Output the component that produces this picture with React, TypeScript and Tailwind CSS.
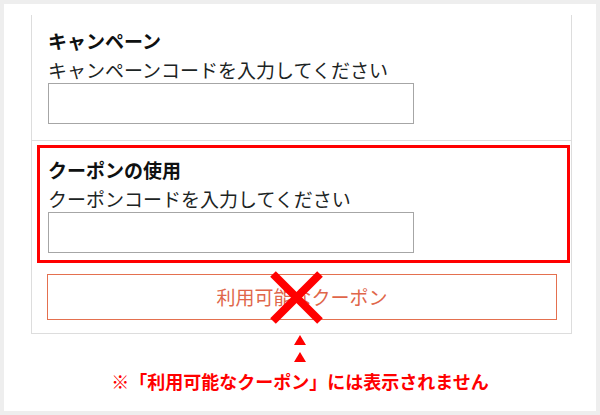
export default function App() {
  const font = { fontFamily: '"Noto Sans CJK JP", "Noto Sans", sans-serif' };

  return (
    <div className="w-[600px] h-[415px] bg-[#eeeeee] p-1" style={font}>
      <div className="h-full bg-white pt-[11px]">
        {/* Card */}
        <div className="ml-[27px] w-[541px] border-x border-b border-[#dddddd] text-[#0f1111]">
          {/* Campaign */}
          <div className="px-[16px] pt-[13px] pb-[16px] border-b border-[#dddddd]">
            <h3 className="text-[19px] font-bold leading-[26px]">キャンペーン</h3>
            <p className="mt-[3px] text-[19px] leading-[26px] text-[#1c2424]">
              キャンペーンコードを入力してください
            </p>
            <div className="w-[366px] h-[41px] border border-[#a6a6a6] bg-white" />
          </div>

          {/* Coupon */}
          <div className="pt-[4px] pl-[5px] pr-[1px]">
            <div className="border-[3px] border-[#ff0000] pl-[8px] pt-[9px] pb-[7px]">
              <h3 className="text-[19px] font-bold leading-[26px]">クーポンの使用</h3>
              <p className="mt-[3px] text-[19px] leading-[26px] text-[#1c2424]">
                クーポンコードを入力してください
              </p>
              <div className="w-[366px] h-[41px] border border-[#a6a6a6] bg-white" />
            </div>
          </div>

          {/* Available coupons button */}
          <div className="pt-[11px] pb-[13px] pl-[15px]">
            <div className="relative w-[510px] h-[46px] border border-[#e4704f] flex items-center justify-center text-[19px] text-[#e0664a]">
              利用可能なクーポン
              <svg
                className="absolute left-[221px] top-[-4px]"
                width="55"
                height="53"
                viewBox="0 0 55 53"
              >
                <line x1="4" y1="3" x2="51" y2="50" stroke="#ff0000" strokeWidth="8" />
                <line x1="51" y1="3" x2="4" y2="50" stroke="#ff0000" strokeWidth="8" />
              </svg>
            </div>
          </div>
        </div>

        {/* Note */}
        <div className="flex flex-col items-center">
          <svg className="mt-[1px]" width="12" height="10" viewBox="0 0 12 10">
            <polygon points="6,0 12,10 0,10" fill="#ff0000" />
          </svg>
          <svg className="mt-[7px]" width="12" height="10" viewBox="0 0 12 10">
            <polygon points="6,0 12,10 0,10" fill="#ff0000" />
          </svg>
          <p className="mt-[6px] text-[18px] leading-[26px] font-bold text-[#ff0000]">
            ※「利用可能なクーポン」には表示されません
          </p>
        </div>
      </div>
    </div>
  );
}
